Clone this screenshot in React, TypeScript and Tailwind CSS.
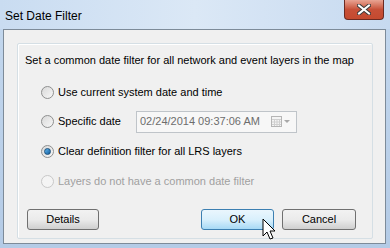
import React from 'react';

function Radio({ checked, disabled }: { checked?: boolean; disabled?: boolean }) {
  return (
    <span
      className={
        'relative flex h-[13px] w-[13px] shrink-0 items-center justify-center rounded-full border ' +
        (disabled
          ? 'border-[#c8c8c8] bg-[#f4f4f4]'
          : 'border-[#8e8f8f] bg-gradient-to-br from-[#d9d9d9] to-[#f7f7f7]')
      }
    >
      {checked && (
        <span className="h-[7px] w-[7px] rounded-full border border-[#1a4f7a] bg-gradient-to-br from-[#5fb6ef] to-[#0f5d9c]" />
      )}
    </span>
  );
}

function Btn({ label, hot, w }: { label: string; hot?: boolean; w: string }) {
  return (
    <div
      className={
        'flex h-[21px] items-center justify-center rounded-[3px] border text-[11px] text-black ' +
        w +
        ' ' +
        (hot
          ? 'border-[#3c7fb1] bg-gradient-to-b from-[#eaf6fd] via-[#d9f0fc] to-[#a7d9f5]'
          : 'border-[#707070] bg-gradient-to-b from-[#f2f2f2] via-[#ebebeb] to-[#cfcfcf]')
      }
    >
      {label}
    </div>
  );
}

export default function App() {
  return (
    <div
      className="relative flex h-[248px] w-[390px] flex-col bg-gradient-to-b from-[#c4d8ee] to-[#b4cbe6]"
      style={{ fontFamily: '"Liberation Sans", Arial, sans-serif' }}
    >
      {/* title bar */}
      <div className="flex h-[29px] items-start justify-between bg-gradient-to-r from-[#c9dcf1] via-[#dbe8f6] to-[#c7daf0] pl-[5px] pr-[6px]">
        <span className="mt-[7px] text-[12px] text-black">Set Date Filter</span>
        <div className="flex h-[20px] w-[40px] items-center justify-center rounded-b-[4px] border border-t-0 border-[#6b2a22] bg-gradient-to-b from-[#e8a493] via-[#c75038] to-[#c44a2f]">
          <svg width="14" height="11" viewBox="0 0 14 11">
            <path
              d="M2 1.5 L12 9.5 M12 1.5 L2 9.5"
              stroke="#3a3a3a"
              strokeWidth="4"
              strokeLinecap="square"
            />
            <path
              d="M2 1.5 L12 9.5 M12 1.5 L2 9.5"
              stroke="#ffffff"
              strokeWidth="2"
              strokeLinecap="square"
            />
          </svg>
        </div>
      </div>

      {/* client area */}
      <div className="mb-[4px] ml-[3px] mr-[4px] flex flex-1 border border-[#7d8b99] bg-[#f0f0f0] pl-[13px] pr-[12px] pt-[13px] pb-[4px]">
        <div className="flex flex-1 flex-col rounded-[2px] border border-[#d5dfe5] pl-[7px] shadow-[inset_1px_1px_0_#ffffff]">
          <div className="mt-[8px] text-[11px] text-black">
            Set a common date filter for all network and event layers in the map
          </div>

          <div className="ml-[16px] mt-[17px] flex flex-col gap-[16.7px] text-[11px] text-black">
            <div className="flex h-[13px] items-center gap-[4px]">
              <Radio />
              <span>Use current system date and time</span>
            </div>
            <div className="flex h-[13px] items-center">
              <Radio />
              <span className="ml-[4px] w-[78px]">Specific date</span>
              <div className="flex h-[22px] w-[161px] items-center border border-[#bfc4c9] bg-[#f7f7f7] pl-[3px] pr-[5px] text-[#6d6d6d]">
                <span className="flex-1">02/24/2014 09:37:06 AM</span>
                <svg width="20" height="12" viewBox="0 0 20 12">
                  <rect x="0.5" y="0.5" width="10" height="10" fill="#f4f4f4" stroke="#b5b5b5" />
                  <path d="M1 3.5 H10 M1 6 H10 M1 8.5 H10 M3.5 3 V10 M6 3 V10 M8.5 3 V10" stroke="#d0d0d0" strokeWidth="1" />
                  <path d="M13 4 L19 4 L16 7 Z" fill="#a8a8a8" />
                </svg>
              </div>
            </div>
            <div className="flex h-[13px] items-center gap-[4px]">
              <Radio checked />
              <span>Clear definition filter for all LRS layers</span>
            </div>
            <div className="flex h-[13px] items-center gap-[4px] text-[#a0a0a0]">
              <Radio disabled />
              <span>Layers do not have a common date filter</span>
            </div>
          </div>

          <div className="mt-auto mb-[8px] flex items-center pl-[2px]">
            <Btn label="Details" w="w-[72px]" />
            <div className="flex-1" />
            <Btn label="OK" hot w="w-[73px]" />
            <div className="w-[8px]" />
            <Btn label="Cancel" w="w-[74px]" />
            <div className="w-[16px]" />
          </div>
        </div>
      </div>

      {/* mouse cursor */}
      <svg className="absolute left-[262px] top-[218px]" width="16" height="24" viewBox="0 0 16 24">
        <path
          d="M1 1 L1 18 L5 14 L8 21 L11 20 L8 13 L13 13 Z"
          fill="#ffffff"
          stroke="#000000"
          strokeWidth="1"
          strokeLinejoin="round"
        />
      </svg>
    </div>
  );
}
